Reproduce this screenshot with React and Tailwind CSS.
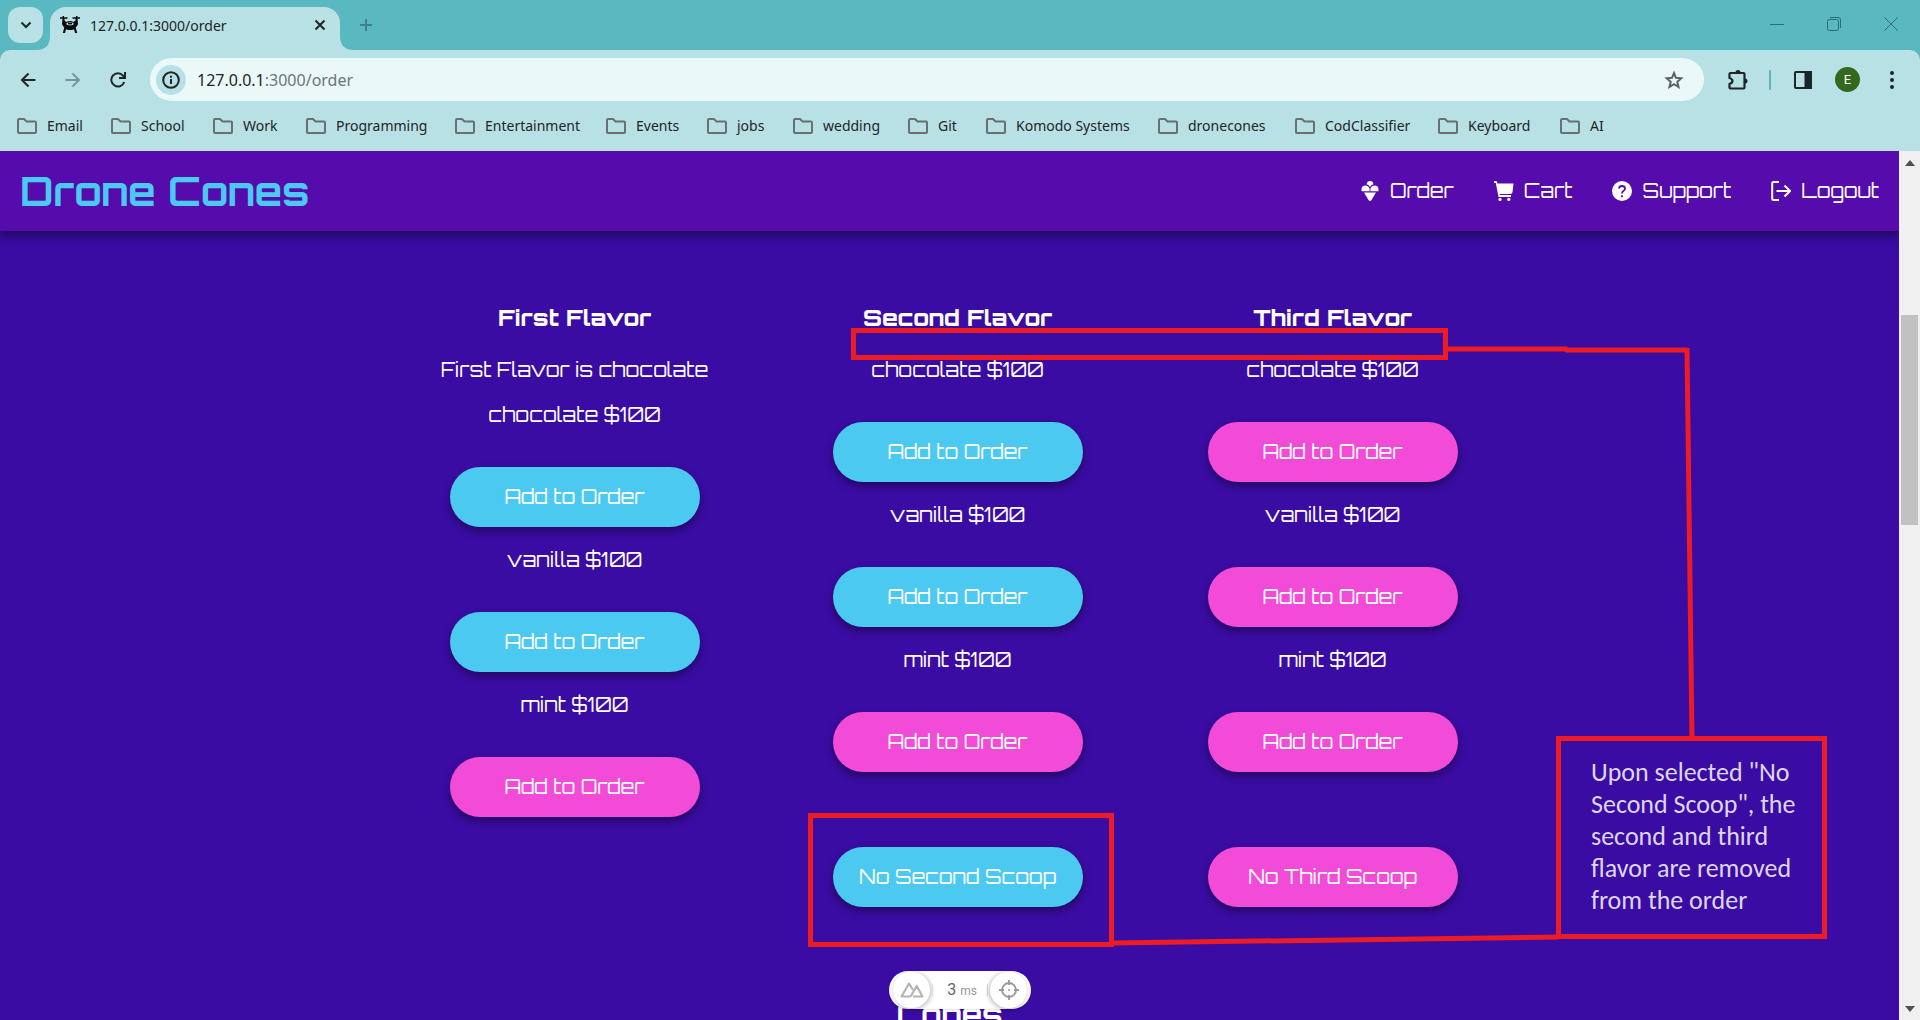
import React from 'react';

const bookmarks = [
  ['Email', 'w-[94px]'],
  ['School', 'w-[102px]'],
  ['Work', 'w-[93px]'],
  ['Programming', 'w-[149px]'],
  ['Entertainment', 'w-[151px]'],
  ['Events', 'w-[101px]'],
  ['jobs', 'w-[86px]'],
  ['wedding', 'w-[115px]'],
  ['Git', 'w-[78px]'],
  ['Komodo Systems', 'w-[172px]'],
  ['dronecones', 'w-[137px]'],
  ['CodClassifier', 'w-[143px]'],
  ['Keyboard', 'w-[122px]'],
  ['AI', 'w-[60px]'],
];

const columns = [
  {
    title: 'First Flavor',
    note: 'First Flavor is chocolate',
    flavors: [['chocolate', true], ['vanilla', true], ['mint', false]],
  },
  {
    title: 'Second Flavor',
    flavors: [['chocolate', true], ['vanilla', true], ['mint', false]],
    skip: ['No Second Scoop', true],
  },
  {
    title: 'Third Flavor',
    flavors: [['chocolate', false], ['vanilla', false], ['mint', false]],
    skip: ['No Third Scoop', false],
  },
];

function Folder() {
  return (
    <svg viewBox="0 0 22 18" className="h-[18px] w-[22px] shrink-0" fill="none" stroke="#6b6f70" strokeWidth="2" strokeLinejoin="round">
      <path d="M2 3q0-1 1-1h5l2.500 2.500H19q1 0 1 1V15q0 1-1 1H3q-1 0-1-1z" />
    </svg>
  );
}

function DroneIcon() {
  return (
    <svg viewBox="0 0 20 18" className="h-[18px] w-5" fill="#0b0b0b">
      <path d="M0 1.200h2.500V0H4v1.200h3.500v1.600H4.500V4.500L6.500 6Q10 3.800 13.500 6l2-1.500V2.800h-3V1.200H16V0h1.500v1.200H20v1.600h-2.500l.5 5.200q-1 2.500-2.300 3.500l1.500 5.500H15l-1-3.800-2 .8h-4l-2-.8-1 3.800H2.800l1.500-5.500Q3 10.500 2 8l.5-5.200H0z" />
      <ellipse cx="10" cy="7.800" rx="3.600" ry="1.500" fill="#b7e1e4" />
      <path d="M8 6.800h4v1.600H8z" />
    </svg>
  );
}

function Pill({ label, blue }) {
  return (
    <button
      type="button"
      className={
        'h-[60px] w-[250px] shrink-0 whitespace-nowrap rounded-full text-[20px] leading-6 text-white shadow-[0_4px_8px_rgba(0,0,0,0.4)] ' +
        (blue ? 'bg-[#4cc9f0]' : 'bg-[#f24bd8]')
      }
    >
      {label}
    </button>
  );
}

function NavLink({ label, children }) {
  return (
    <a href="#" className="flex items-center gap-[10px] text-[20px] leading-7 text-white">
      <svg viewBox="1 1 20 20" className="h-5 w-5" fill="#fff">{children}</svg>
      {label}
    </a>
  );
}

function BrowserChrome() {
  return (
    <header className="bg-[#b7e1e4] font-['Noto_Sans','Open_Sans',sans-serif] text-[#1f2426]">
      <div className="flex h-[50px] items-start bg-[#5ab8c1]">
        <button type="button" aria-label="Search tabs" className="ml-2 mt-[7px] flex h-9 w-[35px] items-center justify-center rounded-xl bg-[#b7e1e4]">
          <svg viewBox="0 0 12 8" className="h-2 w-3" fill="none" stroke="#1f2426" strokeWidth="2"><path d="M1.500 1.500 6 6l4.500-4.500" /></svg>
        </button>
        <div className="flex w-[7px] justify-end">
          <svg viewBox="0 0 14 14" className="mt-9 h-[14px] w-[14px] shrink-0" fill="#b7e1e4"><path d="M14 0q0 14-14 14h14z" /></svg>
        </div>
        <div className="mt-[7px] flex h-[43px] w-[290px] items-center rounded-t-2xl bg-[#b7e1e4] pb-[7px] pl-[10px] pr-[13px]">
          <DroneIcon />
          <span className="ml-[10px] flex-1 text-[14px]">127.0.0.1:3000/order</span>
          <button type="button" aria-label="Close tab" className="p-0">
            <svg viewBox="0 0 14 14" className="h-[14px] w-[14px]" stroke="#1f2426" strokeWidth="2"><path d="M2.500 2.500l9 9M11.500 2.500l-9 9" /></svg>
          </button>
        </div>
        <svg viewBox="0 0 14 14" className="mt-9 h-[14px] w-[14px]" fill="#b7e1e4"><path d="M0 0q0 14 14 14H0z" /></svg>
        <button type="button" aria-label="New tab" className="ml-[5px] mt-[18px]">
          <svg viewBox="0 0 14 14" className="h-[14px] w-[14px]" stroke="#3d8189" strokeWidth="2"><path d="M7 1v12M1 7h12" /></svg>
        </button>
        <div className="ml-auto mr-[22px] mt-[17px] flex gap-[43px]">
          <button type="button" aria-label="Minimize"><svg viewBox="0 0 14 14" className="h-[14px] w-[14px]" stroke="#2f6b72"><path d="M0 7.500h14" /></svg></button>
          <button type="button" aria-label="Restore"><svg viewBox="0 0 14 14" className="h-[14px] w-[14px]" fill="none" stroke="#2f6b72"><rect x=".5" y="2.500" width="11" height="11" rx="2" /><path d="M3 .5h8q2.500 0 2.500 2.500v8" /></svg></button>
          <button type="button" aria-label="Close"><svg viewBox="0 0 14 14" className="h-[14px] w-[14px]" stroke="#2f6b72"><path d="M.5.5l13 13M13.500.5l-13 13" /></svg></button>
        </div>
      </div>
      <div className="bg-[#5ab8c1]">
        <div className="flex h-[59px] items-center rounded-t-[10px] bg-[#b7e1e4] pl-5 pr-[26px]">
          <div className="flex w-[130px] items-center gap-[29px]">
            <button type="button" aria-label="Back"><svg viewBox="0 0 16 16" className="h-4 w-4" fill="none" stroke="#1f2426" strokeWidth="2"><path d="M15.500 8H2M8.500 1.500 2 8l6.500 6.500" /></svg></button>
            <button type="button" aria-label="Forward"><svg viewBox="0 0 16 16" className="h-4 w-4" fill="none" stroke="#76969a" strokeWidth="2"><path d="M.5 8H14M7.500 1.500 14 8l-6.500 6.500" /></svg></button>
            <button type="button" aria-label="Reload"><svg viewBox="0 0 16 16" className="h-4 w-4" fill="none" stroke="#1f2426" strokeWidth="2"><path d="M14.200 10A6.600 6.600 0 1 1 13 3.700L15 6M15 0v6H9" /></svg></button>
          </div>
          <div className="flex h-[43px] flex-1 items-center rounded-full bg-[#ebf8f8] pl-[6px] pr-5">
            <span className="flex h-[30px] w-[30px] items-center justify-center rounded-full bg-[#b7e1e4]">
              <svg viewBox="0 0 18 18" className="h-[18px] w-[18px]" fill="none" stroke="#1f2426" strokeWidth="2"><circle cx="9" cy="9" r="7.800" /><path d="M9 8v5M9 4.800v2" /></svg>
            </span>
            <div className="ml-[11px] flex-1 text-[16px]">127.0.0.1<span className="text-[#6a7678]">:3000/order</span></div>
            <button type="button" aria-label="Bookmark this page">
              <svg viewBox="0 0 20 20" className="h-5 w-5" fill="none" stroke="#5a6163" strokeWidth="2"><path d="M10 3l2 4.800 5.300.5-4 3.500 1.200 5.200L10 14.200 5.500 17l1.200-5.200-4-3.500 5.300-.5z" /></svg>
            </button>
          </div>
          <div className="ml-[23px] flex items-center">
            <button type="button" aria-label="Extensions"><svg viewBox="0 0 22 22" className="h-[22px] w-[22px]" fill="none" stroke="#1f2426" strokeWidth="2.200"><path d="M3.500 4h13q1 0 1 1v13.500q0 1-1 1h-13q-1 0-1-1v-3.500q3-1 3-3t-3-3V5q0-1 1-1z" /><path d="M8.500 3.500a2.500 2.500 0 0 1 5 0zM18 9.500a2.500 2.500 0 0 1 0 5z" fill="#1f2426" stroke="none" /></svg></button>
            <span className="ml-5 h-[20px] w-[2px] bg-[#5ab8c1]" />
            <button type="button" aria-label="Side panel" className="ml-[22px]"><svg viewBox="0 0 20 20" className="h-5 w-5" fill="none" stroke="#1f2426" strokeWidth="2"><rect x="2" y="2" width="16" height="16" rx="1" /><path d="M12.500 2H18v16h-5.500z" fill="#1f2426" /></svg></button>
            <button type="button" aria-label="Profile" className="ml-[22px] flex h-[25px] w-[25px] items-center justify-center rounded-full bg-[#33691e] font-[Roboto,sans-serif] text-[13px] text-white">E</button>
            <button type="button" aria-label="Menu" className="ml-[30px]"><svg viewBox="0 0 4 18" className="h-[18px] w-1" fill="#1f2426"><circle cx="2" cy="2" r="2" /><circle cx="2" cy="9" r="2" /><circle cx="2" cy="16" r="2" /></svg></button>
          </div>
        </div>
      </div>
      <nav aria-label="Bookmarks" className="flex h-[42px] items-start pl-4 pt-[7px]">
        {bookmarks.map(([name, width]) => (
          <a key={name} href="#" className={'flex shrink-0 items-center gap-[9px] whitespace-nowrap text-[14px] leading-5 ' + width}>
            <Folder />
            {name}
          </a>
        ))}
      </nav>
    </header>
  );
}

function Annotations() {
  return (
    <>
      <svg className="pointer-events-none absolute left-0 top-0 h-full w-full" fill="none" stroke="#ed1c24" strokeWidth="5">
        <path d="M1448 198H1566L1567 199H1687M1687 197L1692 588M1113 792L1559 786" />
      </svg>
      <div className="absolute left-[851px] top-[177px] h-[32px] w-[597px] border-[5px] border-[#ed1c24]" />
      <div className="absolute left-[808px] top-[662px] h-[134px] w-[306px] border-[5px] border-[#ed1c24]" />
      <p className="absolute left-[1556px] top-[585px] h-[203px] w-[271px] whitespace-pre border-[5px] border-[#ed1c24] pl-[30px] pt-[15px] font-[Carlito,Lato,sans-serif] text-[26px] leading-[32px] text-[#ded6f2]">
        {'Upon selected "No\nSecond Scoop", the\nsecond and third\nflavor are removed\nfrom the order'}
      </p>
    </>
  );
}

function DevPill() {
  return (
    <div className="absolute bottom-[11px] left-[889px] flex h-[38px] w-[142px] items-center justify-between rounded-full bg-white px-[4px] font-[Roboto,sans-serif] shadow">
      <button type="button" aria-label="Devtools" className="flex h-9 w-[37px] items-center justify-center rounded-full shadow-[1px_1px_5px_rgba(0,0,0,0.3)]">
        <svg viewBox="0 0 24 16" className="h-4 w-6" fill="none" stroke="#b5b5b5" strokeWidth="2.200" strokeLinejoin="round"><path d="M13 14.500h9.500L16.700 4l-5.500 9.500q-.6 1-1.700 1H1.500L9 1.500l4 6.500" /></svg>
      </button>
      <span className="h-3 w-px bg-[#ddd]" />
      <span className="pl-3 pr-2 text-[16px] text-[#666]">3 <span className="text-[12px] text-[#999]">ms</span></span>
      <span className="h-3 w-px bg-[#ddd]" />
      <button type="button" aria-label="Inspect" className="flex h-9 w-[37px] items-center justify-center rounded-full shadow-[-1px_1px_5px_rgba(0,0,0,0.3)]">
        <svg viewBox="0 0 20 20" className="h-5 w-5" fill="none" stroke="#999" strokeWidth="1.800"><circle cx="10" cy="10" r="7" /><path d="M10 0v5M10 15v5M0 10h5M15 10h5" /><circle cx="10" cy="10" r="1" fill="#999" stroke="none" /></svg>
      </button>
    </div>
  );
}

export default function App() {
  return (
    <div className="flex h-screen flex-col overflow-hidden">
      <BrowserChrome />
      <div className="flex min-h-0 flex-1">
        <div className="relative flex-1 overflow-hidden bg-[#3a0ca3] font-[Orbitron,'DejaVu_Sans',sans-serif] text-white">
          <div className="relative flex h-20 items-center justify-between bg-[#560bad] px-5 shadow-[0_4px_10px_rgba(0,0,0,0.5)]">
            <a href="#" className="text-[40px] font-bold leading-none text-[#4cc9f0]">Drone Cones</a>
            <nav className="flex gap-10">
              <NavLink label="Order">
                <path d="M5 12.500h12L12.500 20q-1.500 1.800-3 0z" />
                <path d="M2.600 11.200q-.8-5.500 3.400-5.700Q9.900 5.800 10.600 9v2.200zM19.400 11.200q.8-5.500-3.400-5.700-3.900.3-4.600 3.500v2.200z" />
                <path d="M11 1q3 0 3.400 3.200Q12 5 11 7 10 5 7.600 4.200 8 1 11 1z" />
              </NavLink>
              <NavLink label="Cart"><path d="M1 1h2.500l1 2.500h16L19.500 12q-.3 2-2 2H6.500l.3 1H18v2H5.500L2.800 3H1z" /><circle cx="7" cy="19.400" r="1.600" /><circle cx="15.800" cy="19.400" r="1.600" /></NavLink>
              <NavLink label="Support"><circle cx="11" cy="11" r="10" /><path d="M8 8.500Q8.200 6 11 6t3 2.500q0 1.500-1.600 2.500-1.400.9-1.400 2.500M11 15.200v2" fill="none" stroke="#560bad" strokeWidth="1.800" /></NavLink>
              <NavLink label="Logout"><path d="M9 2H3.500Q2.200 2 2.200 3.300v15.400Q2.200 20 3.500 20H9M6.500 11H20M14.500 5.500 20 11l-5.500 5.500" fill="none" stroke="#fff" strokeWidth="2" /></NavLink>
            </nav>
          </div>
          <main>
            <div className="flex justify-center gap-[125px] pt-[72px]">
              {columns.map((c) => (
                <section key={c.title} className={'flex flex-col items-center whitespace-nowrap ' + (c.note ? 'w-[266px]' : 'w-[250px]')}>
                  <h2 className="text-[23px] font-extrabold leading-[30px]">{c.title}</h2>
                  <div className="mt-6 flex flex-col items-center gap-5 text-[20px] leading-[25px]">
                    {c.note && <p>{c.note}</p>}
                    {c.flavors.map(([f, blue]) => (
                      <div key={f} className="flex flex-col items-center gap-10">
                        <p>{f} $100</p>
                        <Pill label="Add to Order" blue={blue} />
                      </div>
                    ))}
                  </div>
                  {c.skip && <div className="mt-[75px]"><Pill label={c.skip[0]} blue={c.skip[1]} /></div>}
                </section>
              ))}
            </div>
            <h2 className="mt-[88px] text-center text-[30px] font-bold leading-10">Cones</h2>
          </main>
          <Annotations />
          <DevPill />
        </div>
        <div className="flex w-[21px] flex-col items-center bg-[#f0f0f0]">
          <svg viewBox="0 0 10 6" className="mt-[9px] h-[6px] w-[10px]" fill="#505050"><path d="M0 6 5 0l5 6z" /></svg>
          <div className="mt-[149px] h-[210px] w-[17px] bg-[#c1c1c1]" />
          <svg viewBox="0 0 10 6" className="mb-2 mt-auto h-[6px] w-[10px]" fill="#505050"><path d="M0 0h10L5 6z" /></svg>
        </div>
      </div>
    </div>
  );
}
